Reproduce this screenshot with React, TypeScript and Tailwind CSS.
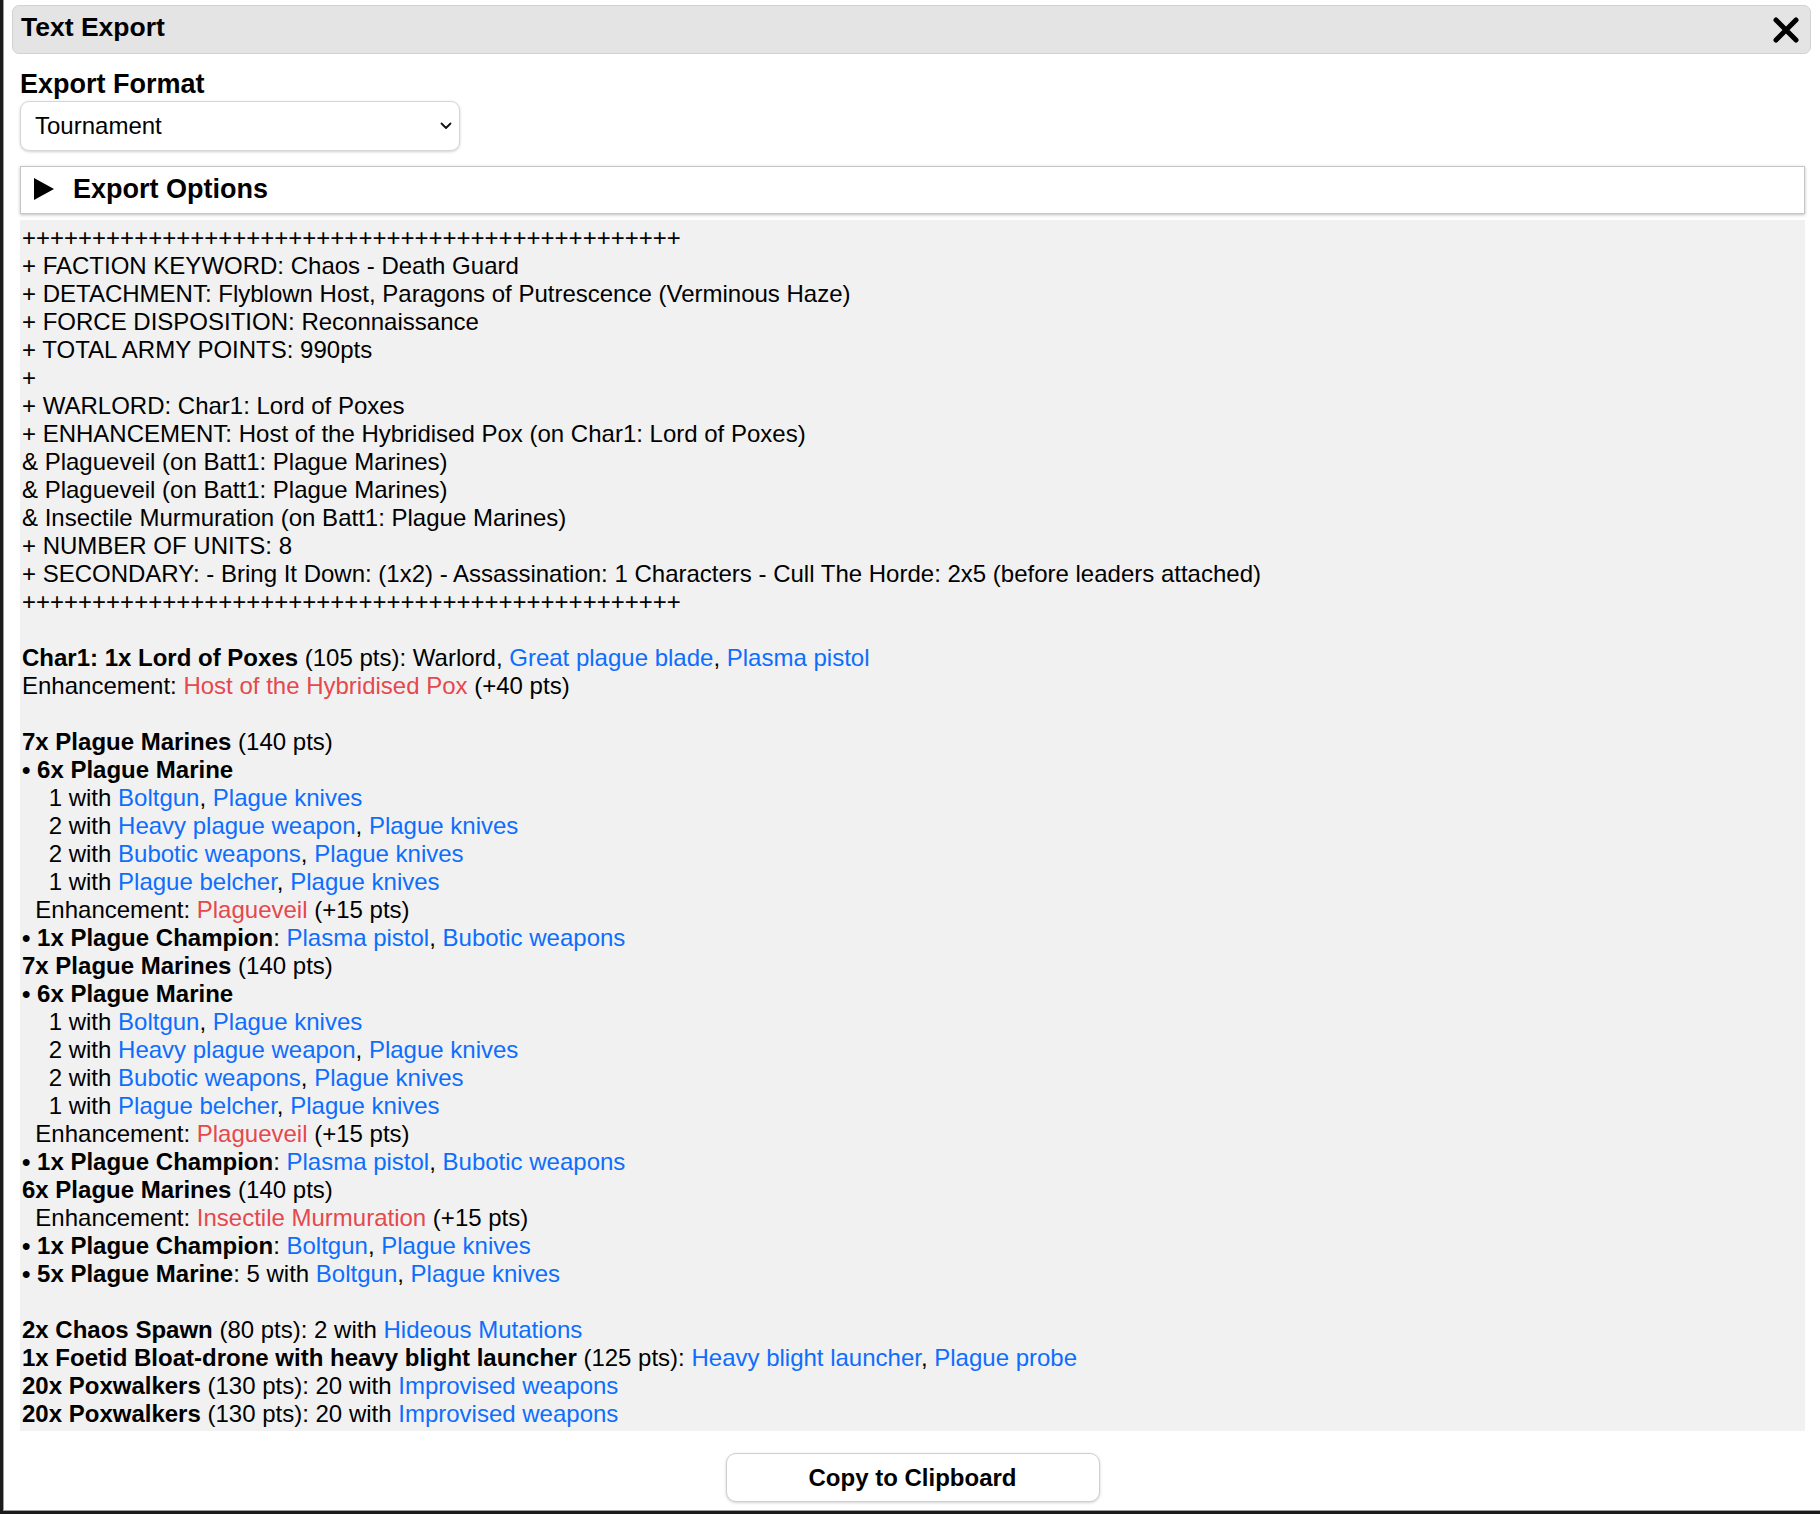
import React from "react";

type Kind = "n" | "b" | "l" | "r";
type Seg = [Kind, string];
type Line = Seg[];

const PLUS = "+".repeat(47);

const marineSquad = (): Line[] => [
  [["b", "7x Plague Marines"], ["n", " (140 pts)"]],
  [["b", "• 6x Plague Marine"]],
  [["n", "    1 with "], ["l", "Boltgun"], ["n", ", "], ["l", "Plague knives"]],
  [["n", "    2 with "], ["l", "Heavy plague weapon"], ["n", ", "], ["l", "Plague knives"]],
  [["n", "    2 with "], ["l", "Bubotic weapons"], ["n", ", "], ["l", "Plague knives"]],
  [["n", "    1 with "], ["l", "Plague belcher"], ["n", ", "], ["l", "Plague knives"]],
  [["n", "  Enhancement: "], ["r", "Plagueveil"], ["n", " (+15 pts)"]],
  [["b", "• 1x Plague Champion"], ["n", ": "], ["l", "Plasma pistol"], ["n", ", "], ["l", "Bubotic weapons"]],
];

const LINES: Line[] = [
  [["n", PLUS]],
  [["n", "+ FACTION KEYWORD: Chaos - Death Guard"]],
  [["n", "+ DETACHMENT: Flyblown Host, Paragons of Putrescence (Verminous Haze)"]],
  [["n", "+ FORCE DISPOSITION: Reconnaissance"]],
  [["n", "+ TOTAL ARMY POINTS: 990pts"]],
  [["n", "+"]],
  [["n", "+ WARLORD: Char1: Lord of Poxes"]],
  [["n", "+ ENHANCEMENT: Host of the Hybridised Pox (on Char1: Lord of Poxes)"]],
  [["n", "& Plagueveil (on Batt1: Plague Marines)"]],
  [["n", "& Plagueveil (on Batt1: Plague Marines)"]],
  [["n", "& Insectile Murmuration (on Batt1: Plague Marines)"]],
  [["n", "+ NUMBER OF UNITS: 8"]],
  [["n", "+ SECONDARY: - Bring It Down: (1x2) - Assassination: 1 Characters - Cull The Horde: 2x5 (before leaders attached)"]],
  [["n", PLUS]],
  [],
  [
    ["b", "Char1: 1x Lord of Poxes"],
    ["n", " (105 pts): Warlord, "],
    ["l", "Great plague blade"],
    ["n", ", "],
    ["l", "Plasma pistol"],
  ],
  [["n", "Enhancement: "], ["r", "Host of the Hybridised Pox"], ["n", " (+40 pts)"]],
  [],
  ...marineSquad(),
  ...marineSquad(),
  [["b", "6x Plague Marines"], ["n", " (140 pts)"]],
  [["n", "  Enhancement: "], ["r", "Insectile Murmuration"], ["n", " (+15 pts)"]],
  [["b", "• 1x Plague Champion"], ["n", ": "], ["l", "Boltgun"], ["n", ", "], ["l", "Plague knives"]],
  [["b", "• 5x Plague Marine"], ["n", ": 5 with "], ["l", "Boltgun"], ["n", ", "], ["l", "Plague knives"]],
  [],
  [["b", "2x Chaos Spawn"], ["n", " (80 pts): 2 with "], ["l", "Hideous Mutations"]],
  [
    ["b", "1x Foetid Bloat-drone with heavy blight launcher"],
    ["n", " (125 pts): "],
    ["l", "Heavy blight launcher"],
    ["n", ", "],
    ["l", "Plague probe"],
  ],
  [["b", "20x Poxwalkers"], ["n", " (130 pts): 20 with "], ["l", "Improvised weapons"]],
  [["b", "20x Poxwalkers"], ["n", " (130 pts): 20 with "], ["l", "Improvised weapons"]],
];

function SegText({ seg }: { seg: Seg }) {
  const [kind, text] = seg;
  if (kind === "b") return <span className="font-bold">{text}</span>;
  if (kind === "l") return <span className="text-[#0d6efd]">{text}</span>;
  if (kind === "r") return <span className="text-[#e5484d]">{text}</span>;
  return <span>{text}</span>;
}

function CloseIcon() {
  return (
    <svg width="28" height="28" viewBox="0 0 28 28" aria-hidden="true">
      <path
        d="M4 4 L24 24 M24 4 L4 24"
        stroke="#000"
        strokeWidth="5"
        strokeLinecap="round"
        fill="none"
      />
    </svg>
  );
}

function Chevron() {
  return (
    <svg width="12" height="8" viewBox="0 0 12 8" aria-hidden="true">
      <path d="M1.5 1.5 L6 6 L10.5 1.5" stroke="#111" strokeWidth="1.8" fill="none" strokeLinecap="round" strokeLinejoin="round" />
    </svg>
  );
}

function Triangle() {
  return (
    <svg width="20" height="22" viewBox="0 0 20 22" aria-hidden="true">
      <polygon points="0,0 20,11 0,22" fill="#000" />
    </svg>
  );
}

export default function App() {
  return (
    <div className="w-[1820px] h-[1514px] bg-[#1b1b1b] pl-[3px] pb-[3px] font-['Liberation_Sans',Arial,sans-serif] text-black overflow-hidden">
      <div className="h-[1511px] bg-white border-l border-b border-[#9c9c9c] flex flex-col">
        {/* title bar */}
        <div className="mt-[5px] ml-[8px] mr-[9px] h-[49px] bg-[#e4e4e4] border border-[#d2d2d2] rounded-[7px] flex justify-between pl-[8px] pr-[10px]">
          <div className="pt-[6px] text-[26.5px] leading-[30px] font-bold">Text Export</div>
          <div className="self-center">
            <CloseIcon />
          </div>
        </div>

        <div className="pl-[16px] pr-[15px] flex flex-col">
          <div className="mt-[15px] text-[27px] leading-[30px] font-bold">Export Format</div>

          <div className="mt-[2px] w-[440px] h-[50px] rounded-[9px] border border-[#d6d6d6] shadow-[0_1px_3px_rgba(0,0,0,0.18)] bg-white flex items-center justify-between pl-[14px] pr-[7px] text-[24px]">
            <span>Tournament</span>
            <Chevron />
          </div>

          <div className="mt-[15px] h-[48px] border border-[#c6c6c6] shadow-[0_1px_3px_rgba(0,0,0,0.25)] bg-white flex items-center pl-[13px] pb-[2px]">
            <Triangle />
            <span className="ml-[19px] text-[27px] font-bold leading-[30px]">Export Options</span>
          </div>

          <div className="mt-[6px] bg-[#f1f1f1] pt-[4px] pb-[3px] pl-[2px] text-[24px] leading-[28px]">
            {LINES.map((line, i) => (
              <div key={i} className="whitespace-pre h-[28px]">
                {line.length === 0 ? "\u00a0" : line.map((s, j) => <SegText key={j} seg={s} />)}
              </div>
            ))}
          </div>

          <div className="mt-[22px] flex justify-center">
            <button className="w-[374px] h-[49px] rounded-[10px] border border-[#cfcfcf] bg-white shadow-[0_1px_3px_rgba(0,0,0,0.18)] text-[24px] font-bold">
              Copy to Clipboard
            </button>
          </div>
        </div>
      </div>
    </div>
  );
}
